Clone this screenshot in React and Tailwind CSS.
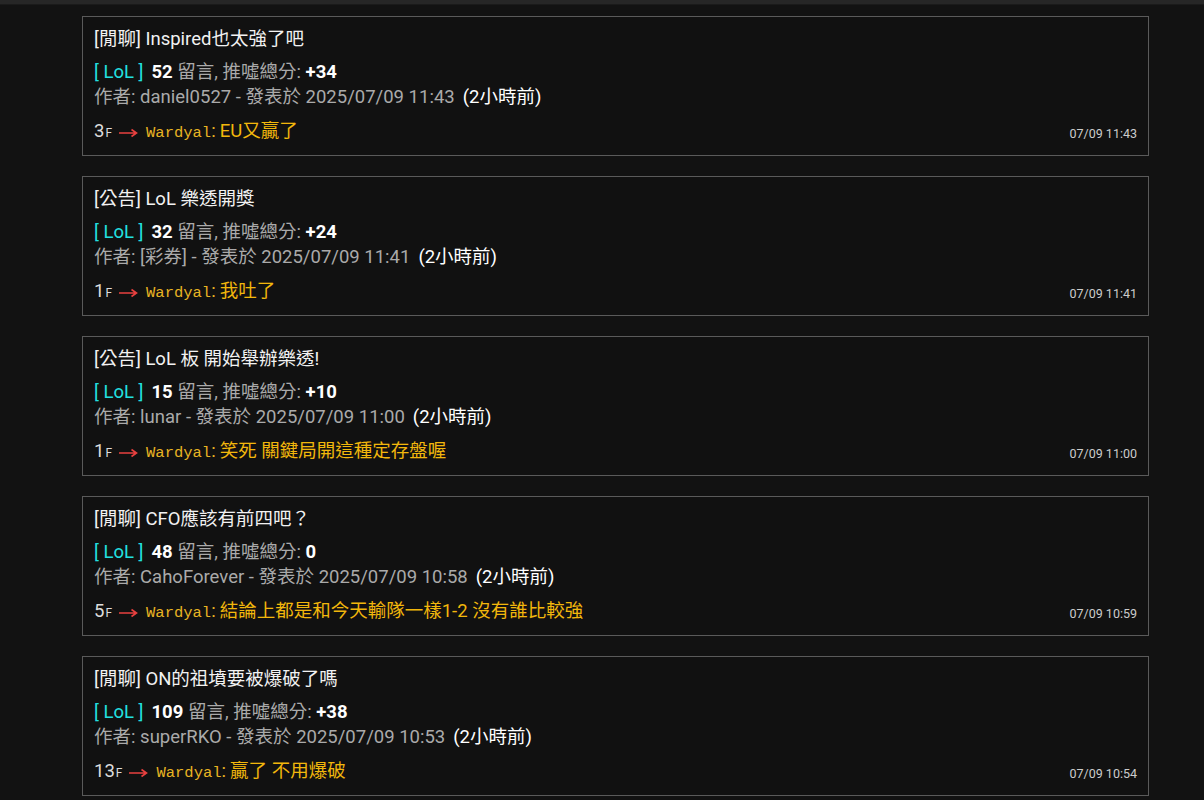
import React from 'react';

const posts = [
  { title: '[閒聊] Inspired也太強了吧', count: 52, score: '+34', author: 'daniel0527', time: '2025/07/09 11:43', floor: 3, msg: 'EU又贏了', date: '07/09 11:43' },
  { title: '[公告] LoL 樂透開獎', count: 32, score: '+24', author: '[彩券]', time: '2025/07/09 11:41', floor: 1, msg: '我吐了', date: '07/09 11:41' },
  { title: '[公告] LoL 板 開始舉辦樂透!', count: 15, score: '+10', author: 'lunar', time: '2025/07/09 11:00', floor: 1, msg: '笑死 關鍵局開這種定存盤喔', date: '07/09 11:00' },
  { title: '[閒聊] CFO應該有前四吧？', count: 48, score: '0', author: 'CahoForever', time: '2025/07/09 10:58', floor: 5, msg: '結論上都是和今天輸隊一樣1-2 沒有誰比較強', date: '07/09 10:59' },
  { title: '[閒聊] ON的祖墳要被爆破了嗎', count: 109, score: '+38', author: 'superRKO', time: '2025/07/09 10:53', floor: 13, msg: '贏了 不用爆破', date: '07/09 10:54' },
];

const sans = "font-['Roboto','Noto_Sans_CJK_TC',sans-serif]";

const Arrow = () => (
  <svg width="19" height="10" viewBox="0 0 19 10" className="ml-[7px] self-center mt-[2px]">
    <path d="M0 5H17.5M12.5 1.5L17.5 5L12.5 8.5" fill="none" stroke="#e8403f" strokeWidth="1.6" />
  </svg>
);

const PostCard = ({ post }) => (
  <div className="border border-[#5a5a5a] bg-[#111111] px-[11px] pt-[10px] pb-[9px]">
    <div className="text-[18.5px] leading-[24px] text-[#f2f2f2]">{post.title}</div>
    <div className="mt-[9px] text-[18.5px] leading-[25px] text-[#aaaaaa]">
      <span className="text-[#22e0e0]">[ LoL ]</span>
      <span className="ml-[8px] font-bold text-white">{post.count}</span> 留言, 推噓總分: <span className="font-bold text-white">{post.score}</span>
    </div>
    <div className="text-[18.5px] leading-[25px] text-[#aaaaaa]">
      作者: {post.author} - 發表於 {post.time}
      <span className="ml-[8px] text-white">(2小時前)</span>
    </div>
    <div className="mt-[8px] flex items-center justify-between h-[28px]">
      <div className="flex items-baseline text-[18.5px]">
        <span className="text-[#dddddd]">{post.floor}</span>
        <span className="ml-[1px] text-[12px] text-[#dddddd]">F</span>
        <Arrow />
        <span className="ml-[8px] font-['Liberation_Mono',monospace] text-[15.5px] text-[#e8b423]">Wardyal</span>
        <span className="text-[#e8b423]">:</span>
        <span className="ml-[4px] text-[#f2b70c]">{post.msg}</span>
      </div>
      <div className="text-[12.5px] text-[#cccccc] pt-[4px]">{post.date}</div>
    </div>
  </div>
);

export default function App() {
  return (
    <div className={`min-h-[800px] bg-[#121212] ${sans}`}>
      <div className="h-[5px] bg-[#262626] border-b border-[#1a1a1a]" />
      <div className="ml-[82px] w-[1067px] pt-[11px] flex flex-col gap-[20px]">
        {posts.map((p, i) => (
          <PostCard key={i} post={p} />
        ))}
      </div>
    </div>
  );
}
